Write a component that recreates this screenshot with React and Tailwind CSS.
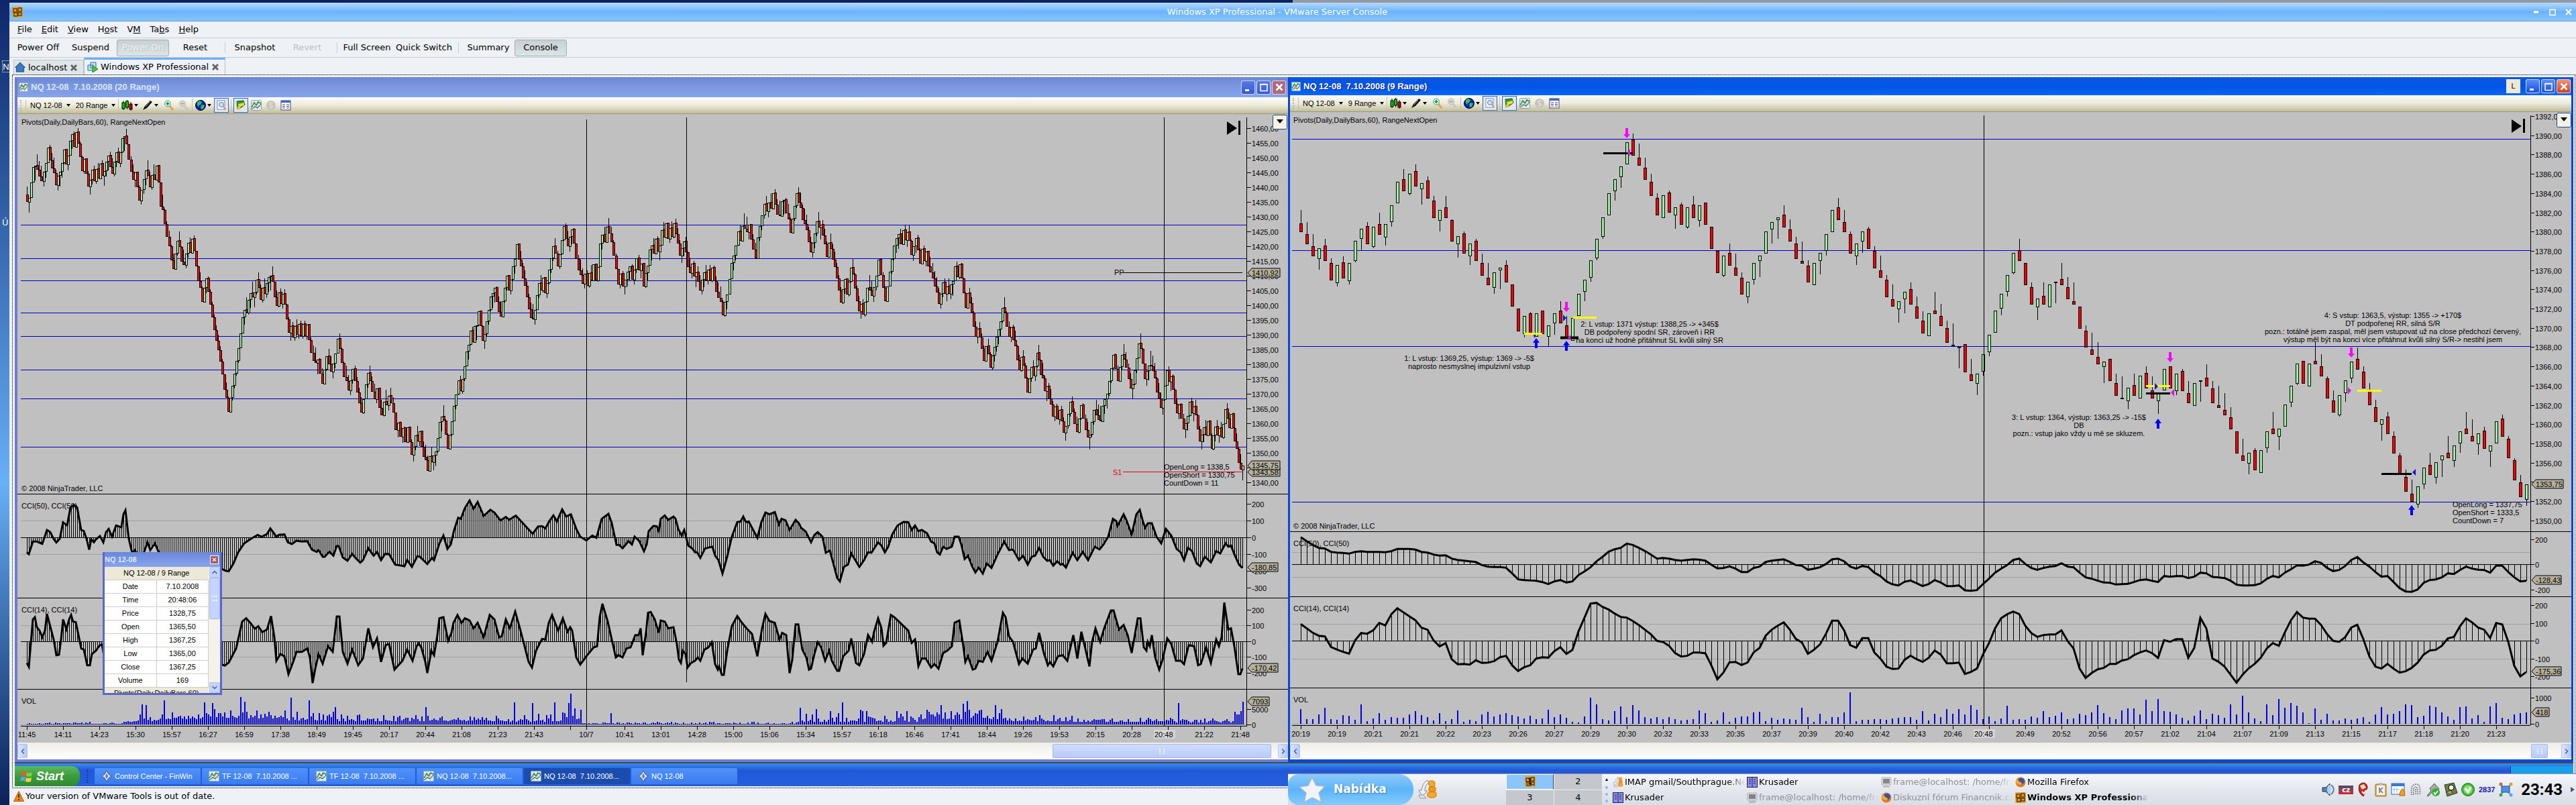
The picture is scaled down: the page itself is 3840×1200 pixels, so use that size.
import React from 'react';
import { ChevronLeft, ChevronRight, ChevronUp, ChevronDown } from 'lucide-react';

/* ---------- chart data ---------- */

// Rows of closing levels. The first number is the x of the first bar,
// the bars of a row are spread evenly up to the start of the next row.
const LEFT_CLOSES = [
  [40, 300, 295, 272, 249, 247, 252, 262, 269, 256, 243, 220, 238, 250, 257, 275, 262],
  [89, 256, 243, 223, 244, 232, 210, 200, 218, 197, 213, 233, 254, 237, 258, 277, 268],
  [137, 253, 269, 252, 265, 244, 261, 255, 241, 232, 248, 258, 241, 227, 242, 227, 206],
  [185, 203, 214, 237, 255, 267, 257, 278, 298, 283, 267, 254, 261, 278, 261, 267, 247, 271],
  [239, 307, 312, 333, 352, 366, 387, 400, 378, 359, 367, 389, 394, 378, 362, 376, 356],
  [289, 373, 396, 418, 428, 449, 429, 415, 434, 453, 472, 491, 507, 521, 538, 557, 580, 592, 613],
  [343, 593, 575, 557, 538, 519, 497, 473, 462, 465, 447, 437, 442, 436, 417, 428, 446, 429, 437, 422, 413, 411],
  [406, 419, 442, 455, 436, 452, 438, 453, 475, 495, 486, 502, 486, 498, 483, 500, 483, 500, 484],
  [460, 506, 525, 537, 540, 536, 556, 571, 551, 531, 542, 553, 542, 527, 505],
  [506, 519, 540, 561, 567, 581, 567, 550, 567, 584, 600, 614, 595, 573, 556],
  [551, 567, 583, 594, 579, 607, 618, 599, 603, 590, 600, 614, 640, 630, 650, 638, 658, 637],
  [610, 658, 677, 666, 649, 657, 643, 665, 680, 685, 701, 680, 688, 679, 673, 653, 629, 621],
  [661, 626, 647, 668, 648, 628, 605, 588, 567, 582, 565, 546, 524, 514, 493],
  [704, 509, 486, 485, 464, 485, 507, 498, 479, 462, 442, 437, 429, 449, 464, 471, 449, 429, 411],
  [758, 432, 417, 397, 386, 364, 386, 396, 414, 425, 442, 460, 473, 475, 462, 440, 422],
  [806, 432, 414, 436, 422, 402, 385, 367, 377, 396, 379, 358, 337, 355, 366, 353, 342],
  [855, 362, 385, 402, 409, 422, 408, 425, 407, 417, 394, 417, 398, 363, 350, 360],
  [904, 338, 347, 360, 380, 400, 423, 408, 426, 417, 405, 397, 416, 402, 385, 402, 393, 426],
  [962, 407, 396, 372, 366, 377, 356, 374, 366, 343, 353, 333, 355, 340, 352, 333, 348, 362, 380],
  [1016, 370, 360, 375, 397, 406, 393, 411, 406, 419, 432, 417, 406, 417, 402, 417, 399],
  [1064, 418, 434, 443, 449, 469, 450, 439, 416, 392, 381, 366, 345, 358, 337, 340, 345, 335],
  [1119, 356, 371, 384, 354, 337, 321, 304, 314, 302, 310, 288, 304, 319, 321, 300, 298, 317, 326],
  [1178, 346, 326, 307, 288, 301, 309, 327, 333, 342, 360, 375, 362, 348, 330, 338, 335, 350, 363, 382],
  [1235, 362, 370, 386, 397, 414, 432, 450, 431, 416, 438, 420, 399, 408, 429, 448, 463, 453, 468],
  [1289, 450, 429, 432, 440, 428, 411, 387, 409, 428, 448, 427, 405, 386, 366, 355, 349, 363, 343],
  [1349, 357, 346, 358, 379, 367, 355, 372, 392, 371, 388, 375, 396, 405, 414, 426, 435, 452],
  [1402, 438, 421, 437, 427, 437, 424, 419, 397, 412, 394, 414, 436, 458, 437, 451, 465, 486, 501],
  [1457, 490, 502, 519, 537, 516, 527, 547, 530, 517, 502, 491, 479, 459, 465, 486, 501, 488, 506, 515, 536],
  [1519, 551, 532, 544, 563, 584, 564, 547, 559, 546, 526, 536, 558, 563, 582, 576, 593, 602, 620],
  [1572, 606, 624, 611, 627, 644, 635, 617, 599, 613, 631, 643, 624, 604, 623, 640, 651],
  [1624, 648, 629, 611, 618, 625, 627, 605, 595, 587, 568, 549, 529, 549, 567, 547, 529, 535, 547, 564, 578],
  [1688, 573, 552, 534, 512, 519, 541, 564, 553, 545, 545, 552, 563, 584, 593, 607],
  [1733, 596, 575, 552, 568, 561, 580, 601, 615, 603, 623, 639, 631, 620, 599, 615, 606, 618, 639, 657],
  [1791, 648, 637, 648, 628, 648, 668, 649, 636, 648, 638, 651, 632, 610, 623, 637, 617, 637, 657, 668, 689, 699, 694],
];

const RIGHT_CLOSES = [
  [1939, 345, 363, 381, 370, 388, 417, 395, 414, 392, 359, 341, 363, 338, 349, 334, 306, 271, 284, 259, 277,
    273, 295, 324, 313, 324, 359, 352, 377, 363, 388, 410, 424, 406, 399, 420, 456, 493, 471, 497, 467,
    497, 485, 467, 481, 503, 474, 438, 417, 388, 356, 324, 288, 267, 248, 212, 231, 246, 267, 291, 320,
    291, 316, 309, 334, 309, 324, 306, 334, 370, 406, 381, 395, 410, 438, 420, 392, 381, 345, 331, 324,
    338, 359, 385, 392, 420, 392, 377, 349, 313, 327, 345, 377, 363, 345, 370, 399, 413, 442, 456, 449,
    435, 453, 474, 496, 467, 467, 485, 510, 514, 517, 554, 567, 557, 528, 499, 463, 438, 410, 377, 388,
    424, 453, 445, 453, 424, 420, 424, 445, 453, 489, 517, 528, 542, 539, 567, 589, 593, 578, 589, 560,
    578, 593, 585, 550, 578, 557, 582, 600, 571, 567, 575, 600, 607, 618, 639, 675, 686, 675, 700, 671,
    643, 646, 639, 603, 575, 542, 571, 542, 542, 560, 593, 614, 589, 567, 539, 550, 578, 603, 628, 625,
    646, 675, 707, 732, 747, 725, 697, 707, 689, 679, 682, 664, 643, 646, 657, 646, 668, 664, 628, 650,
    682, 715, 740, 722],
];

// Indicator rows: x of the first point, then levels in thirds of a pixel below y=720
const RIGHT_CCI50 = [
  [1939, 242, 260, 277, 290, 293, 308, 311, 313, 316, 308, 305, 308, 308, 308, 310, 305, 295, 295, 295, 298,
    308, 311, 320, 325, 323, 338, 344, 347, 350, 353, 367, 374, 376, 376, 379, 404],
  [2263, 431, 434, 436, 437, 443, 452, 440, 434, 445, 440, 412, 395, 377, 350, 330, 307, 296, 290],
  [2425, 271, 277, 290, 304, 320, 338, 335, 338, 344, 347, 344, 341, 343, 347, 365],
  [2560, 382, 380, 373, 383, 398, 398, 380, 374, 353, 347, 344],
  [2659, 341, 353, 367, 370, 388, 383, 377, 362, 341, 338, 350, 374, 383, 371, 376, 401, 416, 440, 453, 458, 442, 436, 448],
  [2866, 461, 452, 434, 445, 461, 461, 458, 480, 482, 479, 452, 428, 401, 383, 367, 344],
  [3010, 338, 362, 380, 388, 380, 374, 371, 359, 374, 377, 401, 422, 428, 437, 445, 446, 454, 452, 451, 443, 434, 431, 437, 443],
  [3226, 416, 419, 416, 416, 425, 419, 401, 404, 420, 422, 425, 437, 455, 458, 458, 457, 449, 429],
  [3388, 416, 422, 401, 386, 368, 370, 365, 350, 357, 380, 394, 389, 371, 344],
  [3514, 331, 355, 374, 398, 419, 416, 443, 470, 485, 487, 476, 446, 434, 431, 422, 404, 407, 389],
  [3676, 374, 383, 388, 389, 401, 370, 370, 398, 422, 440, 437],
];

const RIGHT_CCI14 = [
  [1939, 631, 650, 670, 683, 686, 733, 745, 755, 763, 704, 671, 674, 659, 626, 637, 587],
  [2083, 560, 578, 596, 614, 647, 656, 704, 731, 716, 788, 811, 809, 812, 793, 805, 803, 797, 779, 773, 815],
  [2263, 841, 824, 815, 785, 779, 781, 752, 734, 764, 746, 664, 602, 539],
  [2380, 536, 554, 566, 584, 599, 602, 617, 635, 656, 677, 706, 711, 728, 761, 776, 773, 758, 758, 761, 815],
  [2560, 878, 848, 802, 800, 814, 803, 758, 737, 683, 656, 638],
  [2659, 623, 656, 697, 713, 764, 746, 722, 674, 616, 616, 659, 725, 737, 694, 694, 758, 785, 821, 832, 830, 791, 772, 788],
  [2866, 800, 782, 749, 767, 806, 806, 803, 854, 845, 830, 767, 716, 650, 605, 587, 575, 586, 638, 671, 688, 680, 677, 677,
    659, 706, 740, 830, 872, 850, 833, 827, 809, 809, 794, 788, 770, 758, 749, 761, 782, 703, 710, 698, 698, 782, 737],
  [3280, 602, 650, 785, 799, 821, 857, 893, 857, 829, 809, 782, 740, 716, 728, 668, 614, 577, 602, 607, 607, 635, 676, 706,
    710, 689, 646, 634, 698, 776, 821, 830, 809, 830, 848, 842, 827, 803, 767, 749, 746, 728, 695, 688, 641, 605, 623, 646,
    656, 693, 626, 632, 710, 818, 865, 845],
];

const RIGHT_VOLUME = [
  22, 7, 7, 14, 24, 7, 6, 13, 12, 6, 29, 4, 8, 16, 6, 10, 9, 9, 14, 19, 13, 10, 5, 16, 4, 7, 20, 3, 6, 4, 14, 18, 11, 14, 16,
  13, 11, 8, 12, 7, 8, 21, 10, 14, 9, 3, 2, 11, 39, 29, 7, 5, 19, 26, 10, 28, 20, 10, 8, 10, 7, 10, 7, 5, 6, 7, 20, 16, 3, 5,
  17, 3, 9, 11, 11, 17, 18, 4, 9, 6, 8, 7, 6, 24, 10, 3, 15, 4, 10, 10, 17, 47, 4, 6, 6, 7, 7, 6, 8, 9, 10, 10, 6, 19, 5, 15,
  10, 22, 15, 22, 14, 28, 21, 7, 11, 4, 8, 27, 6, 7, 6, 11, 9, 19, 10, 12, 17, 7, 8, 15, 13, 17, 28, 16, 10, 7, 20, 23, 23,
  14, 36, 19, 37, 19, 18, 14, 9, 5, 12, 20, 7, 15, 13, 9, 29, 14, 42, 17, 8, 4, 29, 13, 37, 24, 31, 27, 17, 1, 23, 6, 15, 5,
  5, 8, 6, 8, 10, 3, 14, 25, 14, 15, 19, 29, 28, 10, 12, 27, 25, 17, 11, 6, 25, 26, 8, 13, 3, 26, 31, 9, 7, 14, 16, 17,
];

const LEFT_CCI50 = '40,310 43,318 49,262 55,262 63,272 70,210 75,220 80,250 84,266 89,250 94,176 100,190 105,110 110,98 115,110 121,210 125,215 129,250 133,298 136,252 140,265 143,252 149,237 154,265 158,220 162,205 167,240 173,190 181,198 184,140 187,122 192,250 197,312 201,300 207,330 214,315 220,265 224,300 231,270 238,320 250,400 280,420 310,350 331,385 337,393 341,395 348,360 355,310 364,270 374,250 384,232 390,240 398,228 403,203 412,240 416,232 424,230 429,265 435,273 442,258 450,262 458,260 465,298 472,308 475,300 481,330 484,330 491,307 497,325 502,282 505,282 511,333 518,348 525,317 530,335 537,356 541,345 549,292 557,325 562,308 568,345 574,317 580,318 589,365 603,372 607,345 614,375 622,328 626,330 631,345 637,362 644,335 647,345 655,270 661,235 667,295 672,275 677,210 683,155 687,160 693,112 700,78 706,115 712,85 721,147 731,120 737,132 746,167 754,152 759,164 769,146 778,175 794,227 802,195 808,193 813,203 819,170 825,145 830,172 838,118 844,150 851,140 859,205 865,240 874,257 883,235 889,245 897,160 907,138 912,180 919,277 923,277 928,292 937,260 942,275 946,240 953,260 960,305 964,275 967,215 974,192 979,193 982,215 985,160 991,145 996,165 1004,150 1007,160 1011,205 1016,235 1020,210 1026,280 1032,293 1036,310 1039,310 1044,335 1051,293 1057,288 1062,285 1066,325 1071,345 1077,405 1084,330 1091,240 1099,175 1104,172 1108,150 1112,175 1116,172 1129,245 1135,175 1141,132 1147,140 1155,130 1161,185 1165,160 1171,167 1177,210 1186,165 1191,180 1194,200 1201,217 1209,265 1214,232 1219,220 1226,240 1231,312 1237,302 1244,380 1248,425 1252,440 1258,375 1264,365 1269,315 1276,350 1281,375 1288,345 1294,310 1299,312 1309,265 1314,280 1319,310 1324,285 1330,230 1338,190 1347,174 1354,175 1359,210 1364,190 1369,215 1374,210 1382,225 1388,262 1393,270 1397,310 1401,320 1406,285 1411,295 1419,285 1423,240 1429,240 1433,275 1438,340 1443,325 1449,372 1454,400 1459,378 1465,405 1471,360 1478,380 1487,320 1497,262 1504,300 1510,298 1519,345 1525,325 1532,365 1538,330 1543,325 1549,290 1555,330 1561,348 1565,345 1570,370 1576,350 1581,365 1584,362 1589,378 1594,345 1599,312 1606,345 1614,308 1622,345 1632,285 1639,297 1645,275 1652,240 1659,160 1664,170 1666,192 1675,140 1679,165 1687,230 1694,140 1699,120 1704,175 1707,200 1711,180 1717,180 1724,240 1731,270 1738,205 1746,235 1754,295 1760,310 1765,345 1771,290 1777,305 1784,360 1789,372 1796,330 1805,355 1813,305 1819,315 1827,270 1831,285 1835,280 1841,325 1847,365 1852,380';

const LEFT_CCI14 = '40,805 43,822 49,610 52,600 55,645 59,660 63,690 67,660 70,585 73,620 80,700 84,770 88,768 91,700 94,610 99,655 103,610 106,590 109,620 113,622 117,680 121,740 125,745 130,815 134,815 137,765 143,750 149,725 152,722 156,790 180,600 200,820 240,700 270,820 300,720 331,812 335,817 341,803 352,740 361,620 367,605 374,628 380,652 385,640 391,667 398,655 404,595 409,690 412,795 418,765 424,775 430,855 437,800 442,755 450,755 458,740 462,780 466,895 470,830 475,765 481,808 489,730 496,755 502,597 506,597 511,755 518,808 525,745 534,815 541,785 549,650 556,735 562,695 568,800 575,725 580,720 588,835 600,795 607,745 615,795 621,730 624,718 628,735 634,800 637,850 643,750 647,770 652,680 655,605 661,600 668,705 673,670 676,625 682,590 688,625 693,605 700,615 706,650 712,625 721,690 730,590 737,610 744,690 748,685 754,610 760,650 768,575 775,650 782,730 788,800 793,825 799,750 808,697 813,700 818,625 823,590 832,660 839,605 846,665 850,645 853,660 859,780 865,812 874,775 885,735 890,730 894,600 898,540 906,620 912,700 918,780 922,770 928,780 934,740 940,735 947,680 952,680 955,650 958,770 963,670 966,580 970,577 976,610 982,670 985,615 991,620 996,650 1004,645 1009,720 1012,790 1015,805 1018,750 1022,765 1025,825 1030,805 1036,795 1040,780 1044,795 1050,745 1056,735 1061,712 1066,810 1070,835 1072,820 1076,858 1079,858 1084,750 1091,640 1099,595 1106,625 1113,650 1121,675 1129,775 1136,650 1141,585 1147,617 1155,625 1162,700 1166,670 1172,680 1177,850 1181,790 1186,632 1190,632 1196,745 1202,780 1206,835 1209,830 1214,765 1219,712 1224,735 1230,795 1236,750 1240,795 1248,840 1251,840 1257,775 1265,750 1269,695 1276,805 1281,815 1288,765 1294,680 1300,710 1303,665 1309,605 1314,650 1317,728 1321,715 1328,590 1333,600 1340,620 1347,640 1354,660 1359,715 1364,700 1369,820 1374,785 1380,785 1388,825 1393,810 1399,830 1406,760 1412,750 1419,730 1423,625 1430,615 1436,730 1439,800 1443,775 1450,835 1454,830 1459,795 1465,800 1472,755 1478,795 1487,710 1495,580 1499,600 1504,685 1510,710 1519,810 1524,785 1532,808 1540,745 1544,740 1549,670 1556,760 1562,815 1565,800 1570,820 1577,775 1584,770 1591,795 1600,680 1606,785 1612,665 1624,820 1628,710 1633,650 1640,710 1646,650 1656,570 1660,570 1668,655 1675,635 1681,680 1687,760 1696,605 1700,605 1705,735 1709,750 1711,710 1714,730 1717,680 1722,780 1728,835 1733,790 1740,695 1746,720 1753,795 1760,795 1765,810 1772,725 1780,730 1786,815 1790,810 1798,735 1805,805 1813,700 1817,730 1821,690 1825,535 1831,655 1835,650 1840,730 1846,855 1849,855 1852,830';

// [from x, low, high] of the volume levels, and the bars that stand out
const VOLUME_LEVELS = [
  [40, 1, 3], [120, 1, 4], [184, 4, 8], [205, 5, 16], [240, 8, 22], [300, 10, 26], [345, 9, 22],
  [430, 6, 20], [500, 5, 15], [660, 5, 13], [760, 4, 16], [835, 6, 22], [868, 1, 4], [1100, 1, 4],
  [1188, 4, 20], [1250, 4, 12], [1280, 4, 20], [1380, 8, 24], [1500, 5, 14], [1600, 4, 10], [1750, 3, 9], [1840, 12, 24],
];
const VOLUME_SPIKES = {
  211: 30, 217: 29, 244: 36, 304: 33, 316: 32, 358: 41, 364: 34, 433: 40, 460: 36, 499: 26, 634: 26, 766: 33, 793: 32,
  826: 33, 847: 32, 850: 46, 856: 24, 910: 17, 1192: 25, 1216: 23, 1255: 33, 1282: 22, 1402: 29, 1435: 31, 1441: 35,
  1483: 29, 1756: 32, 1849: 20, 1852: 34,
};

const LEFT_TIMES = [
  ['11:45', 40], ['14:11', 94], ['14:23', 148], ['15:30', 202], ['15:57', 256], ['16:27', 310], ['16:59', 364],
  ['17:38', 418], ['18:49', 472], ['19:45', 526], ['20:17', 580], ['20:44', 634], ['21:08', 688], ['21:23', 742],
  ['21:43', 796], ['', 850], ['10/7', 874], ['10:41', 931], ['13:01', 985], ['14:28', 1039], ['15:00', 1093],
  ['15:06', 1147], ['15:34', 1201], ['15:57', 1255], ['16:18', 1309], ['16:46', 1363], ['17:41', 1417],
  ['18:44', 1471], ['19:26', 1525], ['19:53', 1579], ['20:15', 1633], ['20:28', 1687], ['', 1741], ['21:22', 1795], ['21:48', 1849],
];
const RIGHT_TIMES = [
  '20:19', '20:19', '20:21', '20:21', '20:22', '20:23', '20:26', '20:27', '20:29', '20:30', '20:32', '20:33', '20:35',
  '20:37', '20:39', '20:40', '20:42', '20:43', '20:46', '', '20:49', '20:52', '20:56', '20:57', '21:02', '21:04',
  '21:07', '21:09', '21:13', '21:15', '21:17', '21:18', '21:20', '21:23',
].map((label, i) => [label, 1939 + i * 54]);

/* ---------- chart helpers ---------- */

function spreadRows(rows, step, endX) {
  const points = [];
  rows.forEach(([x, ...values], r) => {
    const next = rows[r + 1] ? rows[r + 1][0] : endX + step;
    const gap = (next - x) / values.length;
    values.forEach((y, i) => points.push({ x: x + gap * i, y }));
  });
  return points;
}

// A range bar always closes on its high or low, and the next one opens a tick further
function toCandles(points, range, tick) {
  let prev = points[0].y - range / 2;
  let dir = 1;
  return points.map(({ x, y }) => {
    const open = Math.round(prev + dir * tick);
    const up = y < open || (y === open && dir < 0);
    dir = up ? -1 : 1;
    prev = y;
    return { x: Math.round(x), up, open, close: y, end: up ? Math.max(open, y + range) : Math.min(open, y - range) };
  });
}

function Candles({ rows, step, endX, range, tick, width }) {
  const candles = toCandles(spreadRows(rows, step, endX), range, tick);
  return (
    <g stroke="#000" strokeWidth="1">
      {candles.map((c, i) => (
        <g key={i}>
          <line x1={c.x + 0.5} x2={c.x + 0.5} y1={c.close} y2={c.end} />
          <rect
            x={Math.ceil(c.x - width / 2) + 0.5}
            y={Math.min(c.open, c.close) + 0.5}
            width={width}
            height={Math.max(1, Math.abs(c.open - c.close))}
            fill={c.up ? '#98f098' : '#f80000'}
          />
        </g>
      ))}
    </g>
  );
}

const parsePoints = (text) => text.split(' ').map((p) => {
  const [x, y] = p.split(',').map(Number);
  return { x, y: 720 + y / 3 };
});

const levelAt = (points, x) => {
  const i = points.findIndex((p) => p.x >= x);
  if (i <= 0) return points[Math.max(i, 0)].y;
  const a = points[i - 1];
  const b = points[i];
  return a.y + ((b.y - a.y) * (x - a.x)) / (b.x - a.x);
};

function Oscillator({ points, zero, step }) {
  const first = points[0].x;
  const last = points[points.length - 1].x;
  const bars = [];
  for (let x = first; x <= last; x += step) bars.push(x);
  return (
    <g>
      <path
        d={bars.map((x) => `M${x + 0.5} ${zero}V${levelAt(points, x)}`).join('')}
        stroke="#000"
        shapeRendering="crispEdges"
      />
      <polyline points={points.map((p) => `${p.x},${p.y}`).join(' ')} fill="none" stroke="#000" strokeWidth="3" />
    </g>
  );
}

function HLine({ x1, x2, y, color = '#000', width = 1 }) {
  return <line x1={x1} x2={x2} y1={y + 0.5} y2={y + 0.5} stroke={color} strokeWidth={width} shapeRendering="crispEdges" />;
}

function VLine({ x, y1, y2 }) {
  return <line x1={x + 0.5} x2={x + 0.5} y1={y1} y2={y2} stroke="#000" shapeRendering="crispEdges" />;
}

function Label({ x, y, anchor = 'start', color = '#000', children }) {
  return <text x={x} y={y + 4} textAnchor={anchor} fill={color}>{children}</text>;
}

function Scale({ x, ticks }) {
  return ticks.map(([label, y]) => (
    <g key={y}>
      <HLine x1={x} x2={x + 6} y={y} />
      <Label x={x + 7} y={y + 1}>{label}</Label>
    </g>
  ));
}

function PriceTag({ x, y, width, children }) {
  return (
    <g>
      <path d={`M${x + 1} ${y + 7}l6-7h${width - 7}v13h${7 - width}z`} fill="#b4b09c" stroke="#000" />
      <Label x={x + 7} y={y + 7}>{children}</Label>
    </g>
  );
}

function TimeAxis({ times, y }) {
  return times.map(([label, x]) => (
    <g key={x}>
      <VLine x={x} y1={y} y2={y + 6} />
      <Label x={x} y={y + 13} anchor="middle">{label}</Label>
    </g>
  ));
}

function Marker({ x, y, up }) {
  const d = up ? 'M0 0l5 7h-3v8h-4v-8h-3z' : 'M-2 0h4v9h3l-5 6l-5-6h3z';
  return <path d={d} transform={`translate(${x} ${y})`} fill={up ? '#00f' : '#f0f'} />;
}

function Note({ x, y, lines, anchor = 'middle' }) {
  return lines.map((line, i) => <Label key={line} x={x} y={y + i * 12} anchor={anchor}>{line}</Label>);
}

function leftVolume() {
  const bars = [];
  for (let x = 40; x <= 1852; x += 3) {
    const level = VOLUME_LEVELS.filter((l) => l[0] <= x).pop();
    const noise = Math.abs(Math.sin(x * 12.9898) * 43758.5453) % 1;
    bars.push([x, VOLUME_SPIKES[x] || level[1] + noise * noise * (level[2] - level[1])]);
  }
  return bars;
}

function LeftChart() {
  const prices = Array.from({ length: 25 }, (_, i) => [`${1460 - i * 5},00`, 191 + i * 22]);
  return (
    <svg viewBox="26 170 1894 937" className="block h-auto w-full bg-[#c0c0c0] font-['Liberation_Sans',sans-serif] text-[11px]">
      {[335, 385, 418, 466, 501, 551, 594, 666].map((y) => <HLine key={y} x1={31} x2={1859} y={y} color="#0000c8" />)}
      <Candles rows={LEFT_CLOSES} step={3} endX={1852} range={22} tick={1} width={3} />
      {[776, 826, 932, 979, 1080].map((y) => <HLine key={y} x1={31} x2={1859} y={y} color="#a0a0a0" />)}
      {[801, 956].map((y) => <HLine key={y} x1={31} x2={1859} y={y} />)}
      <Oscillator points={parsePoints(LEFT_CCI50)} zero={801} step={3} />
      <Oscillator points={parsePoints(LEFT_CCI14)} zero={956} step={3} />
      <path d={leftVolume().map(([x, h]) => `M${x + 1} 1080v${-h}`).join('')} stroke="#0000e0" strokeWidth="2" shapeRendering="crispEdges" />
      {[736, 891, 1027].map((y) => <HLine key={y} x1={26} x2={1920} y={y} />)}
      <VLine x={874} y1={178} y2={1082} />
      <VLine x={1023} y1={175} y2={1017} />
      <VLine x={1735} y1={175} y2={1082} />
      <VLine x={1858} y1={175} y2={1082} />
      <HLine x1={31} x2={1859} y={1082} />
      <Scale x={1859} ticks={prices} />
      <Scale x={1859} ticks={[['200', 751], ['100', 776], ['0', 801], ['-100', 826], ['-200', 851], ['-300', 876]]} />
      <Scale x={1859} ticks={[['200', 909], ['100', 932], ['0', 956], ['-100', 979], ['-200', 1003], ['5000', 1057], ['0', 1080]]} />
      <TimeAxis times={LEFT_TIMES} y={1082} />
      <rect x="1720" y="1088" width="32" height="13" fill="#d4d4d4" />
      <Label x={1721} y={1095}>20:48</Label>
      <HLine x1={1674} x2={1852} y={406} />
      <Label x={1661} y={406}>PP</Label>
      <HLine x1={1674} x2={1852} y={703} color="#e00020" />
      <Label x={1659} y={704} color="#e00020">S1</Label>
      <Note x={1735} y={696} anchor="start" lines={['OpenLong = 1338,5', 'OpenShort = 1330,75', 'CountDown = 11']} />
      <PriceTag x={1859} y={400} width={49}>1410,92</PriceTag>
      <PriceTag x={1859} y={697} width={49}>1343,58</PriceTag>
      <PriceTag x={1859} y={687} width={49}>1345,75</PriceTag>
      <PriceTag x={1859} y={839} width={46}>-180,85</PriceTag>
      <PriceTag x={1859} y={989} width={46}>-170,42</PriceTag>
      <PriceTag x={1859} y={1039} width={33}>7093</PriceTag>
      <Label x={32} y={182}>Pivots(Daily,DailyBars,60), RangeNextOpen</Label>
      <Label x={32} y={728}>© 2008 NinjaTrader, LLC</Label>
      <Label x={32} y={754}>CCI(50), CCI(50)</Label>
      <Label x={32} y={909}>CCI(14), CCI(14)</Label>
      <Label x={32} y={1045}>VOL</Label>
      <path d="M1829 181l15 10l-15 10zM1846 180h3v21h-3z" />
      <rect x="1897.5" y="171.500" width="21" height="21" rx="2" fill="#f4f2e6" stroke="#1c4a80" />
      <path d="M1903 178h10l-5 6z" />
    </svg>
  );
}

function RightChart() {
  const prices = Array.from({ length: 22 }, (_, i) => [`${1392 - i * 2},00`, Math.round(173 + i * 28.7)]);
  const toPixels = (rows) => spreadRows(rows, 9, 3766).map((p) => ({ x: p.x, y: 720 + p.y / 3 }));
  return (
    <svg viewBox="1923 167 1910 940" className="block h-auto w-full bg-[#c0c0c0] font-['Liberation_Sans',sans-serif] text-[11px]">
      {[207, 373, 516, 748].map((y) => <HLine key={y} x1={1926} x2={3772} y={y} color="#0000c8" />)}
      <Candles rows={RIGHT_CLOSES} step={9} endX={3766} range={32} tick={3.6} width={4} />
      {[823, 860, 930, 982, 1079].map((y) => <HLine key={y} x1={1926} x2={3772} y={y} color="#a0a0a0" />)}
      {[841, 955].map((y) => <HLine key={y} x1={1926} x2={3772} y={y} />)}
      <Oscillator points={toPixels(RIGHT_CCI50)} zero={841} step={9} />
      <Oscillator points={toPixels(RIGHT_CCI14)} zero={955} step={9} />
      <path
        d={RIGHT_VOLUME.map((h, i) => `M${1939 + i * 9} 1079v${-h}`).join('')}
        stroke="#0000e0"
        strokeWidth="2"
        shapeRendering="crispEdges"
      />
      {[792, 889, 1025].map((y) => <HLine key={y} x1={1923} x2={3833} y={y} />)}
      <VLine x={2957} y1={172} y2={1081} />
      <VLine x={3772} y1={172} y2={1081} />
      <HLine x1={1926} x2={3772} y={1081} />
      <Scale x={3772} ticks={prices} />
      <Scale x={3772} ticks={[['200', 804], ['0', 841], ['-200', 879], ['200', 902], ['100', 929], ['0', 955], ['-100', 982], ['-200', 1008], ['1000', 1040], ['0', 1079]]} />
      <TimeAxis times={RIGHT_TIMES} y={1081} />
      <rect x="2942" y="1087" width="32" height="13" fill="#d4d4d4" />
      <Label x={2943} y={1094}>20:48</Label>

      {/* trades */}
      <path d="M2390 228.500h44M3199 586.500h36M3550 706.500h45" stroke="#000" strokeWidth="3" />
      <path d="M2326 503.500h27" stroke="#000" strokeWidth="4" />
      <path d="M2272 497.500h27M2345 473.500h35M3199 575.500h36M3514 582.500h36" stroke="#ff0" strokeWidth="3" />
      <path d="M2330 469l5 5l-5 5zM2286 499h4l-3 5zM3212 571l5 5l-5 5zM3601 699l-5 5l5 5z" fill="#1010e8" />
      <path d="M2430 222l-5 5l5 6zM2341 499l-4 4l4 5zM3241 580l-5 5l5 6zM3500 577l5 5l-5 6z" fill="#e010e0" />
      <Marker x={2425} y={191} />
      <Marker x={2335} y={450} />
      <Marker x={3235} y={525} />
      <Marker x={3505} y={518} />
      <Marker x={2290} y={504} up />
      <Marker x={2335} y={508} up />
      <Marker x={3217} y={624} up />
      <Marker x={3595} y={753} up />
      <Note x={2190} y={534} lines={['1: L vstup: 1369,25, výstup: 1369 -> -5$', 'naprosto nesmyslnej impulzivní vstup']} />
      <Note x={2459} y={483} lines={['2: L vstup: 1371 výstup: 1388,25 -> +345$', 'DB podpořený spodní SR, zároveň i RR', 'na konci už hodně přitáhnut SL kvůli silný SR']} />
      <Note x={3099} y={622} lines={['3: L vstup: 1364, výstup: 1363,25 -> -15$', 'DB', 'pozn.: vstup jako vždy u mě se skluzem.']} />
      <Note
        x={3567}
        y={470}
        lines={[
          '4: S vstup: 1363,5, výstup: 1355 -> +170$',
          'DT podpořenej RR, silná S/R',
          'pozn.: totálně jsem zaspal, měl jsem vstupovat už na close předchozí červený,',
          'výstup měl být na konci více přitáhnut kvůli silný S/R-> nestihl jsem',
        ]}
      />
      <Note x={3656} y={752} anchor="start" lines={['OpenLong = 1337,75', 'OpenShort = 1333,5', 'CountDown = 7']} />

      <PriceTag x={3773} y={715} width={48}>1353,75</PriceTag>
      <PriceTag x={3773} y={858} width={45}>-128,43</PriceTag>
      <PriceTag x={3773} y={994} width={45}>-175,36</PriceTag>
      <PriceTag x={3773} y={1055} width={27}>418</PriceTag>
      <Label x={1928} y={179}>Pivots(Daily,DailyBars,60), RangeNextOpen</Label>
      <Label x={1928} y={784}>© 2008 NinjaTrader, LLC</Label>
      <Label x={1928} y={810}>CCI(50), CCI(50)</Label>
      <Label x={1928} y={907}>CCI(14), CCI(14)</Label>
      <Label x={1928} y={1043}>VOL</Label>
      <path d="M3744 178l15 10l-15 10zM3761 177h3v21h-3z" />
      <rect x="3811.5" y="168.500" width="21" height="21" rx="2" fill="#f4f2e6" stroke="#1c4a80" />
      <path d="M3817 175h10l-5 6z" />
    </svg>
  );
}

/* ---------- icons ---------- */

function ChartIcon({ className = 'h-4 w-4' }) {
  return (
    <svg viewBox="0 0 16 16" className={className}>
      <rect x="0.5" y="0.5" width="15" height="15" rx="1" fill="#e4ecf0" stroke="#8aa" />
      <path d="M1 5h14M1 10h14M5 1v14M10 1v14" stroke="#b8c8d4" />
      <path d="M1 11l4-7l3 4l3-5l4 2" stroke="#2a8a3a" strokeWidth="1.500" fill="none" />
      <path d="M1 14l5-4l4 2l5-6" stroke="#333" fill="none" />
    </svg>
  );
}

function CandlesIcon() {
  return (
    <svg viewBox="0 0 17 16" className="h-4 w-[17px]">
      <path d="M3 1v14M8.500 0v14M14 3v13" stroke="#000" />
      <rect x="1" y="4" width="4" height="9" fill="#0c0" stroke="#000" />
      <rect x="6.500" y="2" width="4" height="9" fill="#0c0" stroke="#000" />
      <rect x="12" y="6" width="4" height="8" fill="#c00" stroke="#000" />
    </svg>
  );
}

function PenIcon() {
  return (
    <svg viewBox="0 0 16 16" className="h-4 w-4">
      <path d="M1 15l3-6l8-8l3 2l-8 9z" fill="#111" />
      <path d="M5 10l6-7" stroke="#aaa" />
    </svg>
  );
}

function ZoomIcon({ plus }) {
  return (
    <svg viewBox="0 0 16 16" className="h-4 w-4">
      <path d="M9 9l5 6" stroke={plus ? '#e8a040' : '#c8c8c0'} strokeWidth="3" />
      <circle cx="6" cy="5.500" r="4.500" fill={plus ? '#d8f4e4' : '#d8d8d2'} stroke={plus ? '#48a090' : '#b8b8b2'} />
      <path d={plus ? 'M6 3v5M3.500 5.500h5' : 'M3.500 5.500h5'} stroke={plus ? '#083' : '#999'} strokeWidth="1.500" />
    </svg>
  );
}

function GlobeIcon() {
  return (
    <svg viewBox="0 0 16 16" className="h-4 w-4">
      <circle cx="8" cy="8" r="7.500" fill="#1018d8" stroke="#000" />
      <path d="M3 3l4-2l3 2l-2 4l-3 1l1 3l-3-3zM10 7l4 1l-2 5l-3 1l-1-4z" fill="#2cc840" />
    </svg>
  );
}

function PreviewIcon() {
  return (
    <svg viewBox="0 0 16 16" className="h-4 w-4">
      <rect x="2" y="1" width="11" height="13" fill="#fff" stroke="#88a" />
      <circle cx="8" cy="7" r="3.500" fill="#c8e4ff" stroke="#3a78c8" />
      <path d="M10.500 9.500l4 5" stroke="#e09040" strokeWidth="2" />
    </svg>
  );
}

function CoinsIcon() {
  return (
    <svg viewBox="0 0 16 16" className="h-4 w-4">
      <path d="M2 2l10-1l2 6l-5 4l-6 3z" fill="#2c9c30" stroke="#186018" />
      <path d="M4 6l9-2v4l-8 3z" fill="#f0dc30" />
      <circle cx="5" cy="12" r="2.500" fill="#e8c820" />
    </svg>
  );
}

function DollarIcon() {
  return (
    <svg viewBox="0 0 16 16" className="h-4 w-4">
      <circle cx="8" cy="8" r="7" fill="#c4c4bc" />
      <path d="M11 5c-5-3-7 2-3 3s2 5-3 3" stroke="#e4e4dc" strokeWidth="1.500" fill="none" />
    </svg>
  );
}

function TableIcon() {
  return (
    <svg viewBox="0 0 16 16" className="h-4 w-4">
      <rect x="1" y="1" width="14" height="14" fill="#fff" stroke="#447" />
      <path d="M1 2.500h14" stroke="#3868c8" strokeWidth="3" />
      <path d="M3 7h4M9 7h4M3 9.500h4M9 9.500h4M3 12h4M9 12h4" stroke="#446" />
    </svg>
  );
}

function VmwareIcon({ className }) {
  return (
    <svg viewBox="0 0 16 16" className={className}>
      <rect width="16" height="16" rx="2" fill="#e8a21c" />
      <path d="M2 3h5v5h-5zM9 2h5v5h-5zM3 9h5v5h-5zM9 9h5v4h-5z" fill="none" stroke="#5c3c18" strokeWidth="1.500" />
    </svg>
  );
}

function Arrow() {
  return <svg viewBox="0 0 6 4" className="h-1 w-1.5"><path d="M0 0h6l-3 4z" /></svg>;
}

function DiamondIcon() {
  return (
    <svg viewBox="0 0 16 16" className="h-4 w-4">
      <path d="M8 0l3 5l4 3l-4 3l-3 5l-3-5l-4-3l4-3z" fill="#d4dcec" stroke="#456" />
      <path d="M8 4l2 4l-2 4l-2-4z" fill="#5878a8" />
    </svg>
  );
}

function FirefoxIcon() {
  return (
    <svg viewBox="0 0 16 16" className="h-4 w-4 shrink-0">
      <circle cx="8" cy="8" r="7.500" fill="#e8761c" />
      <circle cx="9" cy="6.500" r="4.800" fill="#2858a8" />
      <path d="M1 5c3-2 4 1 5 2s4 1 4 3s-4 2-6 1s-4-3-3-6z" fill="#f8a830" />
    </svg>
  );
}

function KrusaderIcon() {
  return (
    <svg viewBox="0 0 16 16" className="h-4 w-4 shrink-0">
      <rect x="0.500" y="0.500" width="15" height="15" fill="#8c8cf0" stroke="#224" />
      <path d="M8 0v16M3 4h3M3 7h3M3 10h3M10 4h3M10 7h3M10 10h3" stroke="#224" />
    </svg>
  );
}

function TerminalIcon() {
  return (
    <svg viewBox="0 0 16 16" className="h-4 w-4 shrink-0 opacity-60">
      <rect x="1" y="1" width="14" height="11" rx="1" fill="#d8d8d8" stroke="#888" />
      <rect x="3" y="3" width="10" height="7" fill="#444" />
      <path d="M3 14.500h10" stroke="#888" strokeWidth="2" />
    </svg>
  );
}

function KontactIcon({ className }) {
  return (
    <svg viewBox="0 0 30 30" className={className}>
      <path d="M15 4c4-3 9-3 11 0v5c-3 2-6 2-8 1z" fill="#f8a828" stroke="#c87808" />
      <path d="M17 12c3-2 8-2 10 0v5c-3 2-8 2-10 0z" fill="#f09818" stroke="#c87808" />
      <path d="M15 20c4-2 10-2 13 0v5c-4 3-10 3-13 0z" fill="#f8a828" stroke="#c87808" />
      <path d="M15 1c-5 2-8 8-9 15h-4l5 9l8-8h-4c0-6 2-10 6-12z" fill="#eceef2" stroke="#889" />
      <path d="M2 23h7l4 5h-9z" fill="#dde0e6" stroke="#99a" />
    </svg>
  );
}

/* ---------- guest windows ---------- */

function CaptionButton({ kind, dim }) {
  const color = kind === 'close'
    ? (dim ? 'bg-[#b06a80]' : 'bg-linear-to-b from-[#f09070] to-[#d83c18]')
    : (dim ? 'bg-linear-to-b from-[#5878e0] to-[#3858d8]' : 'bg-linear-to-b from-[#5a8cf8] to-[#1c4ce0]');
  return (
    <button aria-label={kind} className={`flex h-[21px] w-[21px] items-center justify-center rounded-[3px] border border-white/70 ${color}`}>
      <svg viewBox="0 0 16 16" className="h-4 w-4" stroke="#fff" fill="none">
        {kind === 'minimize' && <path d="M3 12.500h6" strokeWidth="3" />}
        {kind === 'maximize' && <path d="M3 3.500h10v10h-10zM3 4h10" strokeWidth="1.500" />}
        {kind === 'close' && <path d="M3.500 3.500l9 9M12.500 3.500l-9 9" strokeWidth="2.500" />}
      </svg>
    </button>
  );
}

function ChartToolbar({ range }) {
  return (
    <div className="flex h-[25px] items-center border-b border-[#9a9a78] bg-linear-to-b from-[#fdfdfa] via-[#eceadb] to-[#c0bd9c] text-[11px]">
      <span className="ml-1 h-4 border-l-2 border-dotted border-[#b8b8a8]" />
      <span className="ml-1.5 h-4 w-px bg-[#c0bfae]" />
      <button className="ml-1.5 flex items-center gap-1.5">NQ 12-08<Arrow /></button>
      <button className="ml-2 flex items-center gap-1.5">{range}<Arrow /></button>
      <span className="mx-1 h-5 w-px bg-[#c0bfae]" />
      <button aria-label="Chart style" className="flex items-center gap-0.5"><CandlesIcon /><Arrow /></button>
      <button aria-label="Drawing tools" className="ml-1.5 flex items-center gap-0.5"><PenIcon /><Arrow /></button>
      <button aria-label="Zoom in" className="ml-2"><ZoomIcon plus /></button>
      <button aria-label="Zoom out" className="ml-1.5"><ZoomIcon /></button>
      <span className="mx-1 h-5 w-px bg-[#c0bfae]" />
      <button aria-label="Time zone" className="flex items-center gap-0.5"><GlobeIcon /><Arrow /></button>
      <button aria-label="Data box" className="ml-1 flex h-[22px] w-[22px] items-center justify-center border border-[#316ac5] bg-[#e1e6f0]"><PreviewIcon /></button>
      <span className="mx-[3px] h-5 w-px bg-[#c0bfae]" />
      <button aria-label="Chart trader" className="flex h-[22px] w-[22px] items-center justify-center border border-[#316ac5] bg-[#e1e6f0]"><CoinsIcon /></button>
      <button aria-label="Indicators" className="ml-1"><ChartIcon /></button>
      <button aria-label="Strategies" className="ml-1.5"><DollarIcon /></button>
      <button aria-label="Properties" className="ml-1.5"><TableIcon /></button>
    </div>
  );
}

function ScrollBar({ thumb }) {
  const end = 'flex h-[21px] w-[15px] items-center justify-center rounded-xs border border-[#b4c4ee] bg-linear-to-r from-[#dce6fe] to-[#b4c8f8] text-[#4d6185]';
  return (
    <div className="flex h-[25px] items-center bg-linear-to-b from-[#efede6] to-white">
      <button aria-label="Scroll left" className={end}><ChevronLeft size={12} strokeWidth={3} /></button>
      <div className="flex-1" />
      <div className={`flex h-[21px] items-center justify-center rounded-xs border border-[#a4b8ee] bg-linear-to-b from-[#d0dcfe] to-[#b8ccfa] ${thumb}`}>
        <span className="h-2 w-2 border-x-2 border-dotted border-[#eef4fe]" />
      </div>
      <button aria-label="Scroll right" className={end}><ChevronRight size={12} strokeWidth={3} /></button>
    </div>
  );
}

function DataBox() {
  const rows = [
    ['Date', '7.10.2008'], ['Time', '20:48:06'], ['Price', '1328,75'], ['Open', '1365,50'],
    ['High', '1367,25'], ['Low', '1365,00'], ['Close', '1367,25'], ['Volume', '169'],
  ];
  const arrow = 'flex h-4 w-4 items-center justify-center rounded-xs border border-[#b4c4ee] bg-[#c4d4fc] text-[#4d6185]';
  return (
    <section className="absolute top-[708px] left-[127px] w-[178px] border-[3px] border-t-0 border-[#5a68cc] text-[11px]">
      <header className="flex h-[22px] items-center justify-between bg-linear-to-b from-[#6888dc] to-[#88a4ec] pr-0.5 text-[#dce6fc]">
        <span className="font-bold">NQ 12-08</span>
        <button aria-label="Close data box" className="h-[13px] w-[13px] border border-white bg-[#a85868] text-[11px] leading-[10px] font-bold text-white">×</button>
      </header>
      <div className="flex h-[188px] bg-white">
        <div className="flex-1 overflow-hidden">
          <table className="w-full table-fixed border-collapse text-center leading-[19px]">
            <thead>
              <tr className="bg-[#ece9d8]"><th colSpan={2} className="border-b border-[#ccc] p-0 font-normal">NQ 12-08 / 9 Range</th></tr>
            </thead>
            <tbody>
              {rows.map(([name, value]) => (
                <tr key={name}>
                  <td className="border-r border-b border-[#ccc] p-0">{name}</td>
                  <td className="border-r border-b border-[#ccc] p-0">{value}</td>
                </tr>
              ))}
              <tr className="bg-[#ece9d8]"><td colSpan={2} className="p-0 leading-[16px]">Pivots(Daily,DailyBars,60)</td></tr>
            </tbody>
          </table>
        </div>
        <div className="flex w-[17px] flex-col items-center bg-[#f4f2ea]">
          <button aria-label="Scroll up" className={arrow}><ChevronUp size={12} strokeWidth={3} /></button>
          <div className="flex h-[62px] w-4 items-center justify-center rounded-xs border border-[#a4b8ee] bg-[#c4d4fc]">
            <span className="h-2 w-2 border-y-2 border-dotted border-[#eef4fe]" />
          </div>
          <div className="flex-1" />
          <button aria-label="Scroll down" className={arrow}><ChevronDown size={12} strokeWidth={3} /></button>
        </div>
      </div>
    </section>
  );
}

function GuestTaskbar() {
  const items = [
    ['Control Center - FinWin', DiamondIcon], ['TF 12-08  7.10.2008 ...', ChartIcon], ['TF 12-08  7.10.2008 ...', ChartIcon],
    ['NQ 12-08  7.10.2008...', ChartIcon], ['NQ 12-08  7.10.2008...', ChartIcon], ['NQ 12-08', DiamondIcon],
  ];
  return (
    <div className="flex h-[34px] items-center bg-linear-to-b from-[#3c8cec] via-[#2258d8] via-30% to-[#2460dc] pt-1">
      <button className="flex h-[30px] w-[97px] items-center gap-1 rounded-r-xl bg-linear-to-b from-[#5cb85c] via-[#3c9c3c] to-[#2f8a2f] pl-2 text-lg font-bold text-white italic">
        <svg viewBox="0 0 20 20" className="h-5 w-5">
          <path d="M2 4c3-2 5-1 7 0l-1 6c-2-1-4-2-7 0z" fill="#f05828" />
          <path d="M10 4c3 2 5 1 8 0l-1 6c-3 1-5 1-8 0z" fill="#7cd040" />
          <path d="M1 12c3-2 5-1 7 0l-1 6c-2-1-4-2-7 0z" fill="#58a0f8" />
          <path d="M9 12c3 2 5 1 8 0l-1 6c-3 1-5 1-8 0z" fill="#f8d038" />
        </svg>
        <span>Start</span>
      </button>
      <span className="mx-2.5 h-5 border-l-2 border-dotted border-[#1c3ca0]" />
      <div className="flex gap-0.5">
        {items.map(([title, Icon], i) => (
          <button
            key={i}
            className={`flex h-6 w-[158px] items-center gap-1 rounded-xs pl-2.5 text-[11px] whitespace-pre text-white ${i === 4 ? 'bg-[#1c4cae]' : 'bg-linear-to-b from-[#5090f8] to-[#3a7cf0]'}`}
          >
            <Icon />
            {title}
          </button>
        ))}
      </div>
      <div className="ml-auto h-[30px] w-[94px] border-l border-[#0a3c90] bg-[#18a0ec]" />
    </div>
  );
}

function GuestScreen() {
  return (
    <div className="ml-1 mr-px border border-dotted border-black pt-[3px] pr-0.5 pb-0.5 pl-[3px] font-['Liberation_Sans',sans-serif]">
      <div className="grid grid-cols-[1898fr_1916fr] bg-[#3c4c28]">
        <section className="relative border-b-4 border-l-4 border-[#6e7cd4]">
          <header className="flex h-[30px] items-center bg-linear-to-b from-[#6c88d4] via-[#7c98e0] to-[#84a4ec] pr-[3px] pl-0.5 text-[#d8e4f8]">
            <ChartIcon className="h-[14px] w-[14px]" />
            <h2 className="ml-1 flex-1 text-[13px] font-bold whitespace-pre">NQ 12-08  7.10.2008 (20 Range)</h2>
            <div className="flex gap-0.5">
              <CaptionButton kind="minimize" dim />
              <CaptionButton kind="maximize" dim />
              <CaptionButton kind="close" dim />
            </div>
          </header>
          <ChartToolbar range="20 Range" />
          <LeftChart />
          <ScrollBar thumb="mr-2.5 w-[326px]" />
          <DataBox />
        </section>
        <section className="border-x-[3px] border-b-4 border-[#0848d8]">
          <header className="flex h-[27px] items-center bg-linear-to-b from-[#0858e0] via-[#0454e4] to-[#0466fc] pr-px pl-0.5 text-white">
            <ChartIcon className="h-[14px] w-[14px]" />
            <h2 className="ml-1 flex-1 text-[13px] font-bold whitespace-pre [text-shadow:1px_1px_#0a1883]">NQ 12-08  7.10.2008 (9 Range)</h2>
            <button className="mr-2 h-[21px] w-[21px] bg-[#ece9d8] text-[11px] text-black">L</button>
            <div className="flex gap-0.5">
              <CaptionButton kind="minimize" />
              <CaptionButton kind="maximize" />
              <CaptionButton kind="close" />
            </div>
          </header>
          <ChartToolbar range="9 Range" />
          <RightChart />
          <ScrollBar thumb="mr-5 w-[25px]" />
        </section>
      </div>
      <div className="h-0.5 bg-[#3c4c50]" />
      <GuestTaskbar />
    </div>
  );
}

/* ---------- host window ---------- */

function HostTitleBar() {
  return (
    <header className="flex h-7 items-center border-b border-[#5c9cdc] bg-linear-to-b from-[#b4d8fc] via-[#6cb4fc] to-[#88c4fc] pr-1 pl-1 text-white">
      <VmwareIcon className="h-4 w-4" />
      <h1 className="flex-1 text-center text-[13px]">Windows XP Professional - VMware Server Console</h1>
      <div className="flex items-center gap-2.5">
        <button aria-label="Minimize window"><svg viewBox="0 0 14 14" className="h-3.5 w-3.5"><path d="M3 7h7" stroke="#fff" strokeWidth="3" /></svg></button>
        <button aria-label="Maximize window"><svg viewBox="0 0 14 14" className="h-3.5 w-3.5"><path d="M3 3.500h8v8h-8z" stroke="#fff" strokeWidth="1.500" fill="none" /></svg></button>
        <button aria-label="Close window"><svg viewBox="0 0 14 14" className="h-3.5 w-3.5"><path d="M3 3l8 8M11 3l-8 8" stroke="#fff" strokeWidth="2" /></svg></button>
      </div>
    </header>
  );
}

function HostMenu() {
  const menus = [['', 'F', 'ile'], ['', 'E', 'dit'], ['', 'V', 'iew'], ['H', 'o', 'st'], ['V', 'M', ''], ['Ta', 'b', 's'], ['', 'H', 'elp']];
  return (
    <nav className="flex h-[25px] items-center gap-3.5 border-b border-[#c8ccd0] pl-3">
      {menus.map(([before, key, after]) => (
        <button key={before + key + after}>{before}<u>{key}</u>{after}</button>
      ))}
    </nav>
  );
}

function HostToolbar() {
  const button = 'h-[25px] w-[78px] text-center whitespace-nowrap';
  const pressed = 'h-[25px] w-[78px] rounded-[3px] border border-[#9cb0b8] bg-linear-to-b from-[#c8d0d4] to-[#dce4e6]';
  const sep = 'mx-[5px] h-4 w-px bg-[#c8ccd0]';
  return (
    <div className="flex h-[29px] items-center border-b border-[#c8ccd0] pl-1">
      <button className={button}>Power Off</button>
      <button className={button}>Suspend</button>
      <button className={`${pressed} text-[#eef2f4] [text-shadow:1px_1px_#b8c0c4]`}>Power On</button>
      <button className={button}>Reset</button>
      <span className={sep} />
      <button className={button}>Snapshot</button>
      <button className={`${button} text-[#bcc0c4]`}>Revert</button>
      <span className={sep} />
      <button className={button}>Full Screen</button>
      <button className="h-[25px] w-[92px] whitespace-nowrap">Quick Switch</button>
      <span className={sep} />
      <button className={button}>Summary</button>
      <button className={pressed}>Console</button>
    </div>
  );
}

function TabClose({ label }) {
  return (
    <button aria-label={label}>
      <svg viewBox="0 0 12 12" className="h-3 w-3"><path d="M2 2l8 8M10 2l-8 8" stroke="#666" strokeWidth="3" /></svg>
    </button>
  );
}

function HostTabs() {
  return (
    <div className="flex h-[25px] items-end pl-1.5">
      <div className="flex h-[22px] w-[105px] items-center gap-1 border border-b-0 border-[#b8c4c8] bg-[#e0e6e8] pl-px">
        <svg viewBox="0 0 16 16" className="h-[15px] w-4"><path d="M8 0l8 8h-2v7h-12v-7h-2z" fill="#3c78c0" stroke="#1c4478" /></svg>
        <button>localhost</button>
        <TabClose label="Close localhost" />
      </div>
      <div className="flex h-[25px] w-[211px] items-center gap-1 border-x border-t-[3px] border-[#b8c4c8] border-t-[#6cb0f8] bg-[#eef2f7] pl-1">
        <svg viewBox="0 0 16 16" className="h-4 w-4">
          <path d="M5 1h8v8h-8zM1 5h8v8h-8z" fill="#bce0f4" stroke="#2c6c9c" />
          <path d="M8 6l8 5l-8 5z" fill="#4cc83c" stroke="#1c8418" />
        </svg>
        <button className="whitespace-nowrap">Windows XP Professional</button>
        <TabClose label="Close Windows XP Professional" />
      </div>
    </div>
  );
}

/* ---------- desktop panel ---------- */

function TaskEntry({ icon, title, tone = 'text-black' }) {
  return (
    <button className={`flex h-[23px] w-[200px] items-center gap-0.5 overflow-hidden pl-0.5 text-left ${tone}`}>
      {icon}
      <span className="flex-1 overflow-hidden whitespace-nowrap [mask-image:linear-gradient(to_right,black_85%,transparent)]">{title}</span>
    </button>
  );
}

function TrayIcons() {
  return (
    <div className="flex items-center gap-1">
      <svg viewBox="0 0 22 22" className="h-[22px] w-[22px]"><path d="M2 8h5l6-6v18l-6-6h-5z" fill="#4888a8" stroke="#234" /><path d="M15 4c5 4 5 10 0 14" stroke="#48a" strokeWidth="2" fill="none" /><ellipse cx="12" cy="11" rx="3" ry="7" fill="#bce" /></svg>
      <span className="flex h-[13px] w-[22px] items-center justify-center bg-linear-to-b from-[#484868] to-[#d01828] text-[10px] font-bold text-white">cz</span>
      <svg viewBox="0 0 22 22" className="h-[22px] w-[22px]"><path d="M5 4c6-6 12-2 12 4l-6 13c-5-3-8-8-6-17z" fill="#d02820" stroke="#511" /><path d="M6 5l6-2l3 5l-6 3z" fill="#f4dcc0" /><path d="M9 14l3 3l3-5" stroke="#fff" strokeWidth="2" fill="none" /></svg>
      <svg viewBox="0 0 22 22" className="h-[22px] w-[22px]"><rect x="3" y="3" width="16" height="18" rx="1" fill="#e0b050" stroke="#a07020" /><rect x="5" y="5" width="12" height="14" fill="#f4f4f4" /><rect x="8" y="1" width="6" height="4" fill="#bbb" /><path d="M9 8v8M14 8l-4 4l4 4" stroke="#888" strokeWidth="2" fill="none" /></svg>
      <svg viewBox="0 0 22 22" className="h-[22px] w-[22px]"><rect x="1" y="2" width="19" height="16" fill="#fff" stroke="#26a" /><path d="M1 4h19" stroke="#3878d0" strokeWidth="4" /><path d="M5 8v8M9 8v8M3 11h10" stroke="#9bd" /><path d="M13 20c0-4 2-9 4-10s4 6 4 10z" fill="#f0a020" stroke="#a60" /></svg>
      <svg viewBox="0 0 22 22" className="h-[22px] w-[22px]"><path d="M5 19c-1-8-1-15 6-16s7 8 6 16M8 19c-1-7 0-12 3-12s3 6 3 12M11 10v9" stroke="#777" strokeWidth="1.500" strokeDasharray="2 1" fill="none" /></svg>
      <svg viewBox="0 0 22 22" className="h-[22px] w-[22px]"><path d="M2 20l6-7l-2-4l7-7l7 8l-6 6l-5-1l-5 6z" fill="#aaa" stroke="#555" /><circle cx="15" cy="15" r="6" fill="#30b030" /><path d="M12 15l2 3l4-5" stroke="#fff" strokeWidth="2" fill="none" /></svg>
      <svg viewBox="0 0 22 22" className="h-[22px] w-[22px]"><path d="M2 4l14-3l5 15l-15 5z" fill="#6c8040" stroke="#232" /><circle cx="12" cy="8" r="4" fill="#f4f4e8" stroke="#000" /><path d="M5 15l6-3l3 5" fill="#c8a868" stroke="#432" /></svg>
      <svg viewBox="0 0 22 22" className="h-[22px] w-[22px]"><circle cx="11" cy="11" r="9.500" fill="#3cb838" stroke="#1c7c1c" /><circle cx="11" cy="11" r="6.500" fill="#8ce070" /><path d="M7 9l4 6l4-8" stroke="#fff" strokeWidth="2.500" fill="none" /></svg>
      <span className="w-[26px] text-center font-['Liberation_Sans',sans-serif] text-[11px] font-bold text-[#1818b0]">2837</span>
      <svg viewBox="0 0 22 22" className="h-[22px] w-[22px]"><path d="M4 4l14 14M18 4l-14 14" stroke="#66a" strokeWidth="1.500" /><rect x="5" y="6" width="12" height="9" fill="#4c90e8" stroke="#258" /><circle cx="4" cy="3" r="2.500" fill="#d86030" /><circle cx="19" cy="3" r="2.500" fill="#e0a020" /><circle cx="4" cy="19" r="2.500" fill="#40a840" /><circle cx="19" cy="19" r="2.500" fill="#58a8e8" /></svg>
    </div>
  );
}

function DesktopPanel() {
  const pager = 'flex h-[23px] w-[71px] items-center justify-center text-[13px]';
  return (
    <footer className="absolute right-0 bottom-0 flex h-[47px] w-1/2 items-center border-t border-[#8c98a8] bg-linear-to-b from-[#f4f6fa] via-[#e4e8ee] to-[#d8dee4] font-['DejaVu_Sans',sans-serif] text-[13px]">
      <button className="flex h-[46px] w-[187px] shrink-0 items-center gap-3 rounded-r-[22px] rounded-l-2xl bg-linear-to-b from-[#8ccafc] via-[#5cb4f8] to-[#84ccfc] pl-4 text-[17px] font-bold text-white [text-shadow:1px_1px_2px_#3878b0]">
        <svg viewBox="0 0 40 40" className="h-10 w-10"><path d="M20 2l6 12l13 1l-9 10l4 14l-14-7l-12 7l3-14l-10-9l13-2z" fill="#f0f4f8" stroke="#a8b8c8" strokeWidth="1.500" /></svg>
        Nabídka
      </button>
      <KontactIcon className="ml-1.5 h-[30px] w-[30px] shrink-0" />
      <div className="ml-[102px] grid grid-cols-2 gap-px bg-[#e8ecf0]">
        <button className={`${pager} relative border border-white border-r-[#444] bg-[#8cc4fc]`}>
          <VmwareIcon className="absolute h-4 w-4" />
          <span className="relative">1</span>
        </button>
        <button className={`${pager} bg-[#c4c8cc]`}>2</button>
        <button className={`${pager} bg-[#c4c8cc]`}>3</button>
        <button className={`${pager} bg-[#c4c8cc]`}>4</button>
      </div>
      <div className="flex w-[14px] flex-col items-center gap-1.5 text-[8px] leading-[8px]">
        <span>▴</span>
        <span className="h-1 w-1 rounded-full bg-[#88b8f0]" />
        <span className="h-1 w-1 rounded-full bg-[#88b8f0]" />
        <span className="h-1 w-1 rounded-full bg-[#88b8f0]" />
      </div>
      <div className="grid grid-cols-[200px_200px_200px_200px]">
        <TaskEntry icon={<KontactIcon className="h-4 w-4 shrink-0" />} title="IMAP gmail/Southprague.Net" />
        <TaskEntry icon={<KrusaderIcon />} title="Krusader" />
        <TaskEntry icon={<TerminalIcon />} title="frame@localhost: /home/frame" tone="text-[#8c9094]" />
        <TaskEntry icon={<FirefoxIcon />} title="Mozilla Firefox" />
        <TaskEntry icon={<KrusaderIcon />} title="Krusader" />
        <TaskEntry icon={<TerminalIcon />} title="frame@localhost: /home/frame" tone="text-[#8c9094]" />
        <TaskEntry icon={<FirefoxIcon />} title="Diskuzní fórum Financnik.cz" tone="text-[#8c9094]" />
        <TaskEntry icon={<VmwareIcon className="h-4 w-4 shrink-0" />} title="Windows XP Professional" tone="font-bold text-black" />
      </div>
      <div className="ml-auto flex items-center gap-3 pr-0.5">
        <TrayIcons />
        <time className="font-['Roboto',sans-serif] text-2xl font-bold">23:43</time>
        <svg viewBox="0 0 6 8" className="h-2 w-1.5"><path d="M0 0l6 4l-6 4z" fill="#556" /></svg>
      </div>
    </footer>
  );
}

function App() {
  return (
    <div className="relative flex min-h-screen w-full overflow-hidden bg-[#0c2260]">
      <aside className="w-[14px] shrink-0 overflow-hidden bg-linear-to-b from-[#10266a] via-[#68b0f8] via-60% to-[#0c2258] pt-[90px] pl-[3px] text-[13px] text-white">
        <div className="h-[18px] border border-r-0 border-dotted border-white leading-4">N</div>
        <div className="mt-[214px]">Ú</div>
      </aside>
      <div className="flex min-w-0 flex-1 flex-col">
        <div className="flex h-1">
          <div className="w-1/2" />
          <div className="w-1/2 bg-[#9498a4]" />
        </div>
        <div className="flex flex-1 flex-col bg-[#eef2f7] font-['DejaVu_Sans',sans-serif] text-[13px] text-black">
          <HostTitleBar />
          <HostMenu />
          <HostToolbar />
          <HostTabs />
          <GuestScreen />
          <div className="flex h-[23px] items-center pl-1.5">
            <svg viewBox="0 0 16 16" className="h-4 w-4">
              <path d="M8 0.500l7.500 15h-15z" fill="#f08818" stroke="#b85808" />
              <path d="M8 5v5M8 12v2" stroke="#432" strokeWidth="2" />
            </svg>
            <span className="ml-0.5">Your version of VMware Tools is out of date.</span>
          </div>
        </div>
      </div>
      <DesktopPanel />
    </div>
  );
}

export default App;
